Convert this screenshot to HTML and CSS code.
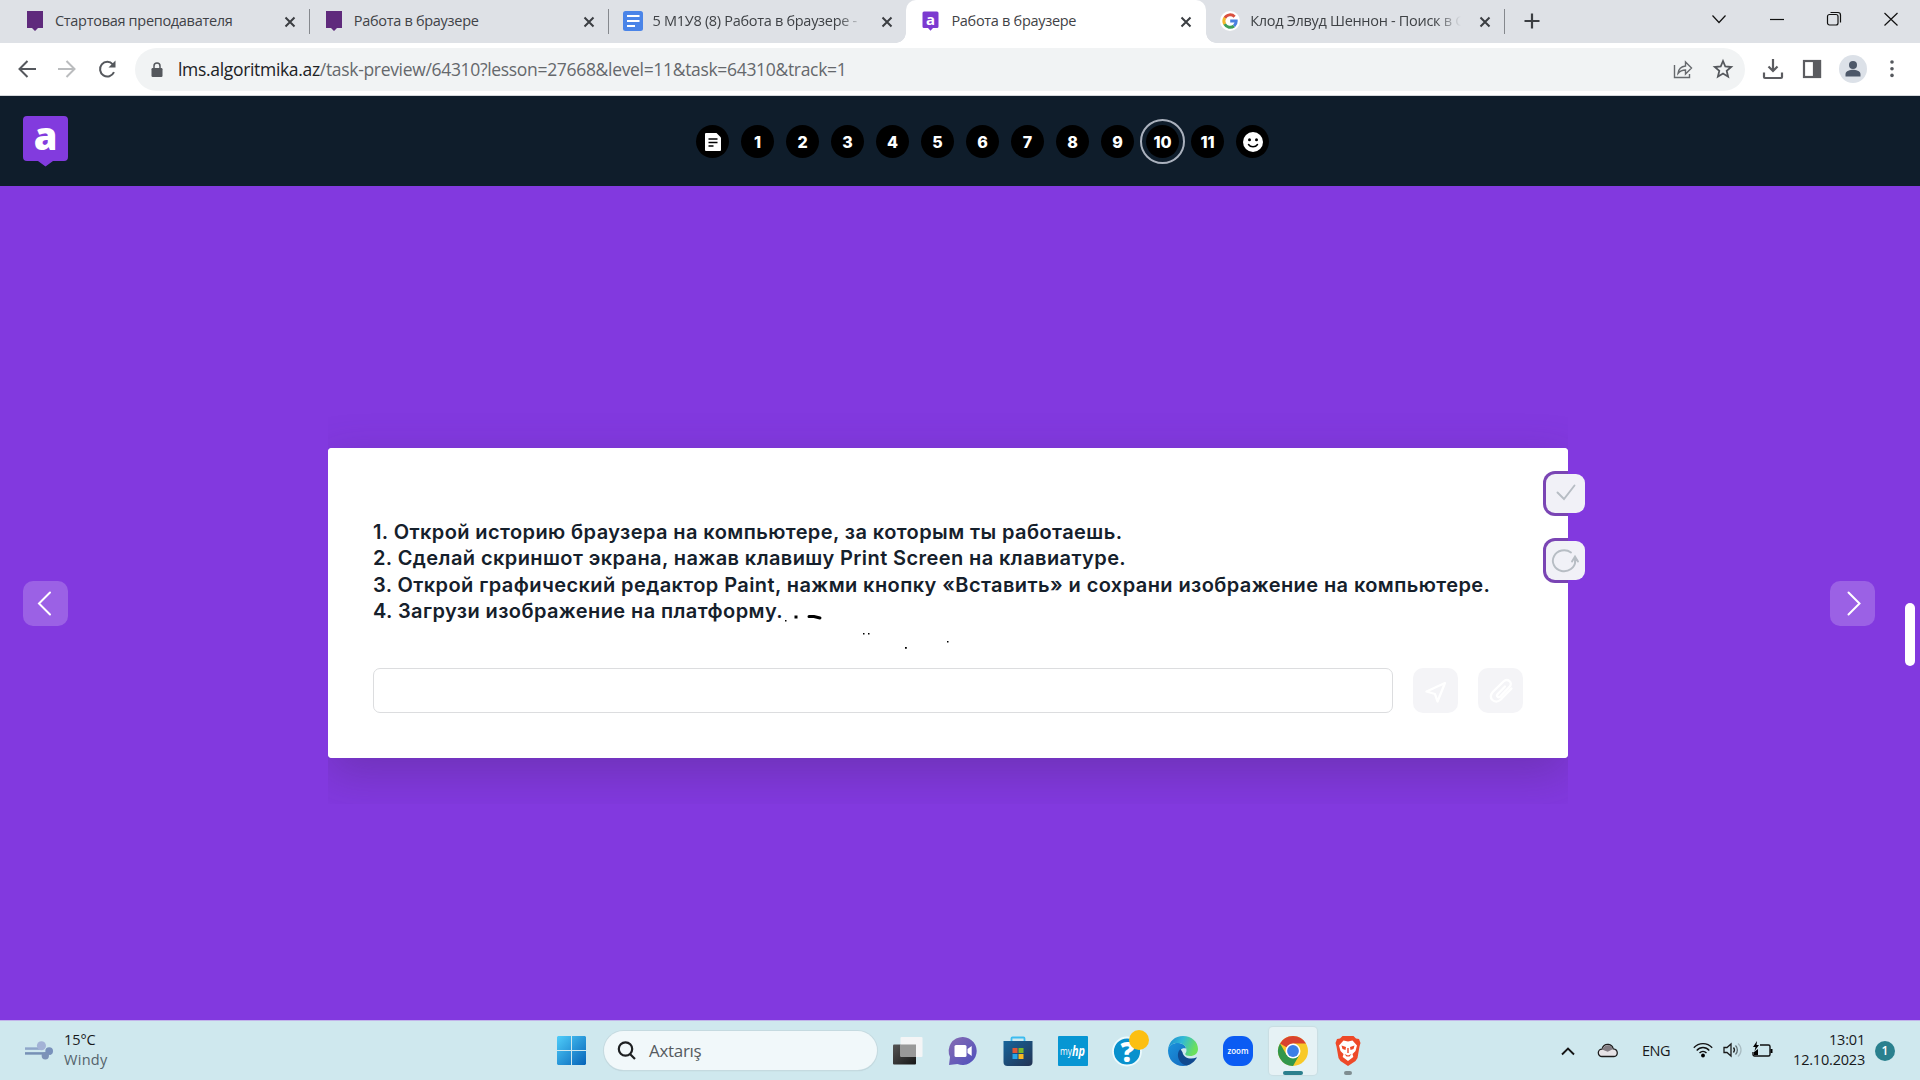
FILE: index.html
```html
<!DOCTYPE html>
<html lang="ru">
<head>
<meta charset="utf-8">
<title>Работа в браузере</title>
<link rel="stylesheet" href="styles.css">
</head>
<body>
<header class="tabstrip">
  <div class="tab">
    <svg class="fav" viewBox="0 0 20 24"><path fill="#5f2a7c" d="M2 2h16v17h-5l-3 3-3-3H2z"/></svg>
    <span class="tab-title">Стартовая преподавателя</span>
    <svg class="close" viewBox="0 0 12 12"><path d="M1.500 1.500l9 9M10.500 1.500l-9 9"/></svg>
  </div>
  <div class="tab">
    <svg class="fav" viewBox="0 0 20 24"><path fill="#5f2a7c" d="M2 2h16v17h-5l-3 3-3-3H2z"/></svg>
    <span class="tab-title">Работа в браузере</span>
    <svg class="close" viewBox="0 0 12 12"><path d="M1.500 1.500l9 9M10.500 1.500l-9 9"/></svg>
  </div>
  <div class="tab no-sep">
    <svg class="fav" viewBox="0 0 20 24"><rect y="2" width="20" height="20" rx="2.500" fill="#4a84e8"/><path stroke="#fff" stroke-width="2.200" d="M4 7h12.500M4 12h12.500M4 17h8"/></svg>
    <span class="tab-title fade">5 М1У8 (8) Работа в браузере -</span>
    <svg class="close" viewBox="0 0 12 12"><path d="M1.500 1.500l9 9M10.500 1.500l-9 9"/></svg>
  </div>
  <div class="tab active no-sep">
    <svg class="fav" viewBox="0 0 20 24"><path fill="#7c3ad0" d="M3 2.500h13a1.500 1.500 0 0 1 1.500 1.500v13.500a1.500 1.500 0 0 1-1.500 1.500h-4l-2.500 2.700L7 19H3a1.500 1.500 0 0 1-1.500-1.500V4A1.500 1.500 0 0 1 3 2.500z"/><text x="9.500" y="15.500" class="fav-a">a</text></svg>
    <span class="tab-title">Работа в браузере</span>
    <svg class="close" viewBox="0 0 12 12"><path d="M1.500 1.500l9 9M10.500 1.500l-9 9"/></svg>
  </div>
  <div class="tab">
    <svg class="fav" viewBox="0 0 20 24"><circle cx="10" cy="12" r="10" fill="#fff"/><g fill="none" stroke-width="3"><path stroke="#d9503f" d="M4.800 8.900A6.200 6.200 0 0 1 14.600 7.700"/><path stroke="#f2b92d" d="M4.800 8.700a6.500 6.500 0 0 0 0 6.600"/><path stroke="#3f9f58" d="M4.700 15.100a6.200 6.200 0 0 0 9.300 1.900"/><path stroke="#4a80e0" d="M10.200 12h6a6.200 6.200 0 0 1-2.200 5"/></g></svg>
    <span class="tab-title fade">Клод Элвуд Шеннон - Поиск в G</span>
    <svg class="close" viewBox="0 0 12 12"><path d="M1.500 1.500l9 9M10.500 1.500l-9 9"/></svg>
  </div>
  <svg class="plus" viewBox="0 0 16 16"><path d="M8 .5v15M.5 8h15"/></svg>
  <div class="window-buttons">
    <svg viewBox="0 0 16 16"><path d="M1.500 4.500L8 11.500l6.500-7"/></svg>
    <svg viewBox="0 0 16 16"><path d="M1 8.500h14"/></svg>
    <svg viewBox="0 0 16 16"><rect x="1.500" y="3.500" width="10.500" height="10.500" rx="2"/><path d="M4.500 1.500h7.500a2.500 2.500 0 0 1 2.500 2.500v7.500"/></svg>
    <svg viewBox="0 0 16 16"><path d="M1.500 2l13 12.500M14.500 2l-13 12.500"/></svg>
  </div>
</header>

<div class="toolbar">
  <svg class="tool" viewBox="0 0 20 20"><path d="M19 10H3M10.500 2L2.500 10l8 8"/></svg>
  <svg class="tool dim" viewBox="0 0 20 20"><path d="M1 10h16M9.500 2l8 8-8 8"/></svg>
  <svg class="tool" viewBox="0 0 20 20"><path d="M17 13.200A7.300 7.300 0 1 1 15.800 5.300"/><path class="solid" d="M18.500 1.500v7h-7z"/></svg>
  <div class="omnibox">
    <svg class="lock" viewBox="0 0 12 16"><rect x=".5" y="6" width="11" height="9" rx="1.200" fill="#55585d"/><path d="M3 6V4a3 3 0 0 1 6 0v2" fill="none" stroke="#55585d" stroke-width="1.500"/></svg>
    <span class="url"><b>lms.algoritmika.az</b>/task-preview/64310?lesson=27668&amp;level=11&amp;task=64310&amp;track=1</span>
    <svg class="share" viewBox="0 0 20 20"><path d="M1.500 6v12.500h15V15M5 14.500c.5-4.500 3-7 7.500-7.500V3l6 6-6 6v-4c-3.500 0-5.500 1-7.500 3.500z"/></svg>
    <svg class="star" viewBox="0 0 20 20"><path d="M10 2l2.300 5.500 5.900.5-4.500 3.900 1.400 5.800L10 14.600l-5.100 3.100 1.400-5.800L1.800 8l5.900-.5z"/></svg>
  </div>
  <div class="toolbar-actions">
    <svg viewBox="0 0 22 22"><path d="M11 1v11M6.500 8.500L11 13l4.500-4.500M2 14.500V19a1 1 0 0 0 1 1h16a1 1 0 0 0 1-1v-4.500"/></svg>
    <svg viewBox="0 0 22 22"><rect x="3" y="3" width="16" height="16"/><path class="solid" d="M13 3h6v16h-6z"/></svg>
    <svg class="avatar" viewBox="0 0 28 28"><circle cx="14" cy="14" r="14" fill="#dce1e8"/><circle cx="14" cy="10" r="4" fill="#4d5869"/><path fill="#4d5869" d="M6.500 21.500v-2.500c0-3.300 5-4.300 7.500-4.300s7.500 1 7.500 4.300v2.500z"/></svg>
    <svg class="dots" viewBox="0 0 22 22"><circle cx="11" cy="4" r="1.800"/><circle cx="11" cy="10.700" r="1.800"/><circle cx="11" cy="17.400" r="1.800"/></svg>
  </div>
</div>

<nav class="lesson-nav">
  <svg class="logo" viewBox="0 0 45 50"><path fill="#823bde" d="M4 0h37a4 4 0 0 1 4 4v37a4 4 0 0 1-4 4H30l-7.500 5.500L15 45H4a4 4 0 0 1-4-4V4a4 4 0 0 1 4-4z"/><text x="22.500" y="33.500">a</text></svg>
  <ol class="steps">
    <li><svg viewBox="0 0 16 18"><path fill="#fff" d="M1 0h10.500L16 4.500V17a1 1 0 0 1-1 1H1a1 1 0 0 1-1-1V1a1 1 0 0 1 1-1z"/><path stroke="#000" stroke-width="1.500" d="M3.500 6h9M3.500 9.500h9M3.500 13h5"/></svg></li>
    <li>1</li><li>2</li><li>3</li><li>4</li><li>5</li><li>6</li><li>7</li><li>8</li><li>9</li>
    <li class="current">10</li><li>11</li>
    <li><svg class="smile" viewBox="0 0 20 20"><circle cx="10" cy="10" r="10" fill="#fff"/><circle cx="6.500" cy="7.800" r="1.500"/><circle cx="13.500" cy="7.800" r="1.500"/><path fill="none" stroke="#000" stroke-width="1.500" stroke-linecap="round" d="M5.500 12.500c2 3 7 3 9 0"/></svg></li>
  </ol>
</nav>

<main class="stage">
  <button class="arrow"><svg viewBox="0 0 45 45"><path d="M27 11.500L16 22.500l11 11"/></svg></button>
  <section class="card">
    <div class="task">
      <p>1. Открой историю браузера на компьютере, за которым ты работаешь.</p>
      <p>2. Сделай скриншот экрана, нажав клавишу Print Screen на клавиатуре.</p>
      <p>3. Открой графический редактор Paint, нажми кнопку «Вставить» и сохрани изображение на компьютере.</p>
      <p>4. Загрузи изображение на платформу.</p>
    </div>
    <svg class="marks" viewBox="0 0 170 40"><path d="M2 10h1.500v1.500H2zM11.500 5.500h3v3h-3zM80 23h1.500v1.500H80zM85 23h1.500v1.500H85zM122 37h1.800v1.800H122zM164 31h1.500v1.500H164z"/><path fill="none" stroke="#000" stroke-width="3" stroke-linecap="round" d="M26 6.500h5l6 1.500"/></svg>
    <div class="answer">
      <input class="field" type="text">
      <button class="answer-btn"><svg viewBox="0 0 45 45"><path d="M32 15L13.500 23.500l8.500 2.500 2.500 7.500z"/></svg></button>
      <button class="answer-btn"><svg viewBox="0 0 45 45"><path d="M27 18.500l-7.500 7.700c-1.500 2 .8 4 2.600 2.400l9.400-9.800c4-4.300-2-9-6-5.300L15 23.800c-6 6.200 1.800 13.200 7.800 7.700L33.500 20.500"/></svg></button>
    </div>
    <div class="side-tools">
      <button class="side-btn"><svg viewBox="0 0 39 39"><path d="M11.500 18.500l6.500 6.500 10.500-13.500"/></svg></button>
      <button class="side-btn"><svg viewBox="0 0 39 39"><path d="M25 11.500A11.200 10.500 0 1 0 29.300 20V16M26 20.500l3-5 3 5M29 15.500v6"/></svg></button>
    </div>
  </section>
  <button class="arrow"><svg viewBox="0 0 45 45"><path d="M18.500 11.500l11 11-11 11"/></svg></button>
  <div class="scroll-thumb"></div>
</main>

<footer class="taskbar">
  <div class="weather">
    <svg viewBox="0 0 30 22"><g fill="none" stroke="#8fa6c9" stroke-width="2.600"><path d="M0 8.500h16"/><path stroke="#7790b5" d="M0 13.500h27"/></g><circle cx="17" cy="5.500" r="4.700" fill="#a3b2d6"/><circle cx="25" cy="11" r="4" fill="#7991bb"/><circle cx="21" cy="16" r="3.800" fill="#7c93b8"/></svg>
    <div class="weather-text"><span>15°C</span><span class="muted">Windy</span></div>
  </div>
  <div class="pinned">
    <svg class="win" viewBox="0 0 29 29"><defs><linearGradient id="w" x2="1" y2="1"><stop stop-color="#4fcdfa"/><stop offset="1" stop-color="#0563b8"/></linearGradient></defs><path fill="url(#w)" d="M1 0h13v14H0V1zM15 0h13l1 1v13H15zM0 15h14v14H1l-1-1zM15 15h14v13l-1 1H15z"/></svg>
    <div class="search">
      <svg viewBox="0 0 20 20"><circle cx="8.500" cy="8" r="6.700"/><path d="M13 13l5 5"/></svg>
      <span>Axtarış</span>
    </div>
    <div class="apps">
      <div class="app"><svg viewBox="0 0 30 30"><defs><linearGradient id="tv" y2="1"><stop stop-color="#555"/><stop offset="1" stop-color="#171717"/></linearGradient></defs><rect y="8.500" width="23" height="20" rx="1" fill="url(#tv)"/><rect x="7.500" y="1" width="22" height="20" rx="1" fill="#f5f5f5" opacity=".95"/><path fill="#999" d="M7.500 8.500H23V21H8.500a1 1 0 0 1-1-1z"/></svg></div>
      <div class="app"><svg viewBox="0 0 30 30"><defs><linearGradient id="ch" y2="1"><stop stop-color="#876cb2"/><stop offset="1" stop-color="#4e50bd"/></linearGradient></defs><path fill="url(#ch)" d="M15 1a14 14 0 1 1-5.500 27L1 29l1-8A14 14 0 0 1 15 1z"/><rect x="6.500" y="9" width="12" height="12" rx="1.500" fill="#fff"/><path fill="#fff" d="M19.500 13l4.200-3v10l-4.200-3z"/></svg></div>
      <div class="app"><svg viewBox="0 0 30 30"><defs><linearGradient id="st" y2="1"><stop stop-color="#16659b"/><stop offset="1" stop-color="#233353"/></linearGradient></defs><path fill="none" stroke="#3cbcf0" stroke-width="1.800" d="M8.500 6V2.500q0-1 1-1h11q1 0 1 1V6"/><path fill="url(#st)" d="M.5 5h29v21a4 4 0 0 1-4 4h-21a4 4 0 0 1-4-4z"/><path fill="#e05836" d="M9.500 12h5v5h-5z"/><path fill="#7ab929" d="M15.500 12h5v5h-5z"/><path fill="#28a5e9" d="M9.500 18h5v5h-5z"/><path fill="#f9b922" d="M15.500 18h5v5h-5z"/></svg></div>
      <div class="app"><svg viewBox="0 0 30 30"><rect width="30" height="30" rx="1" fill="#0796d3"/><text class="my" x="2" y="18.500" textLength="12" lengthAdjust="spacingAndGlyphs">my</text><text class="hp" x="14" y="19.500" textLength="13" lengthAdjust="spacingAndGlyphs">hp</text></svg></div>
      <div class="app"><svg viewBox="0 0 30 30"><circle cx="14" cy="15.500" r="14" fill="#0991cd" stroke="#edfafd" stroke-width="1.800"/><text class="question" x="14.500" y="25.500">?</text><circle cx="26" cy="4" r="10" fill="#fcbf12"/></svg></div>
      <div class="app"><svg viewBox="0 0 30 30"><defs><linearGradient id="e1" x2="1" y2=".3"><stop stop-color="#1a86cf"/><stop offset=".5" stop-color="#31b9d6"/><stop offset="1" stop-color="#6be05c"/></linearGradient><linearGradient id="e2" y2="1"><stop stop-color="#1b93dc"/><stop offset="1" stop-color="#1468bd"/></linearGradient></defs><path fill="url(#e2)" d="M0 14.500C.5 9 5 7 9.500 7c5 0 8.500 2.500 8.500 5.500-4-1-7 1.500-7 5.500 0 6 6 9.500 10 10.500-2 1-4 1.500-6 1.500C6 30 0 23 0 14.500z"/><path fill="#10498f" d="M12.500 13c-5.500 5-1.500 15.500 6.500 16.400 4-.8 8-4.200 10-8.200-6 2.800-13.500 1-14.500-5z"/><path fill="url(#e1)" d="M0 14C1 5 7 0 15 0c9 0 15 6 15 13 0 4.500-3.500 7-8 7-3 0-4.800-1-4.800-2 0-.8 1.300-1.500 1.300-3.800C18.500 10 14.500 7 9.500 7 5 7 1 9.500 0 14z"/></svg></div>
      <div class="app"><svg viewBox="0 0 30 30"><rect width="30" height="30" rx="11" fill="#0b5cf3"/><text class="zoom" x="15" y="17.500" textLength="21" lengthAdjust="spacingAndGlyphs">zoom</text></svg></div>
      <div class="app open"><svg viewBox="0 0 30 30"><circle cx="15" cy="15" r="15" fill="#f8c928"/><path fill="#d9432f" d="M2 7.500A15 15 0 0 1 28 7.500H15L8.500 11.200z"/><path fill="#31974b" d="M2 7.500a15 15 0 0 0 13 22.500l6.500-11.200L8.500 18.800z"/><circle cx="15" cy="15" r="7.500" fill="#fff"/><circle cx="15" cy="15" r="5.900" fill="#3b7fe7"/></svg></div>
      <div class="app idle"><svg viewBox="0 0 30 30"><path fill="#ee4928" d="M9.500 0h11l2.500 2.500 3 .5 1.500 4-1 3.500-2 11.500-2 3-7.500 5-7.500-5-2-3-2-11.500-1-3.500L4 3l3-.5z"/><path fill="#fff" d="M15 5.500l4.500-1 4.500 5-1.500 5.500-3 3 .8 3-5.300 4-5.300-4 .8-3-3-3L6 9.500l4.500-5z"/><path fill="#ee4928" d="M8.500 9.500l4.500 1.500-.5 3-3-1zM21.500 9.500L17 11l.5 3 3-1zM11.500 18l3.500 1.500 3.500-1.500-2 2.500h-3zM14.300 12h1.400v5h-1.400z"/></svg></div>
    </div>
  </div>
  <div class="tray">
    <svg class="up" viewBox="0 0 14 10"><path d="M1 8.500l6-6 6 6"/></svg>
    <svg class="cloud" viewBox="0 0 20 16"><path fill="#e6e3e6" stroke="#1c1c1c" stroke-width="1.300" d="M4 14.500a3.700 3.700 0 0 1 0-7.400C5 4 7.500 2.200 10.500 2.500c3 .3 4.200 2.300 4.700 4.300 5.300.5 5.300 7.700.8 7.700z"/><path fill="#817b81" d="M4 7.500C5 4.500 8 2.900 10.500 3.200c2.500.3 3.900 2 4.200 4l-5 2.500z"/></svg>
    <span class="lang">ENG</span>
    <svg class="wifi" viewBox="0 0 20 16"><g fill="none" stroke="#111" stroke-width="1.300"><path d="M.8 5.700c5-5.500 13.400-5.500 18.400 0"/><path d="M3.700 8.500c3.500-4 9.100-4 12.600 0"/><path d="M6.500 11c2-2.300 5-2.300 7 0"/></g><circle cx="10" cy="13.500" r="1.900"/></svg>
    <svg class="sound" viewBox="0 0 20 16"><g fill="none" stroke="#1a1a1a" stroke-width="1.300"><path d="M1 5.500h3L8 2v12l-4-3.500H1z"/><path d="M10.500 5.500c1.200 1.500 1.200 3.500 0 5"/><path stroke="#5f6d71" d="M12.500 3.500c2.500 2.500 2.500 6.500 0 9"/><path stroke="#a9bcc2" d="M15 1.500c4 3.500 4 9.500 0 13"/></g></svg>
    <svg class="battery" viewBox="0 0 22 18"><path fill="none" stroke="#111" stroke-width="1.400" d="M8 4h8.500A1.500 1.500 0 0 1 18 5.500v8a1.500 1.500 0 0 1-1.500 1.500h-14A1.500 1.500 0 0 1 1 13.500V11"/><path d="M18.500 8h2v4h-2zM5 0L1 6h2.500l-1 4 4.500-6H4.500zM2 11l4-3v6H2z"/></svg>
    <div class="clock"><span>13:01</span><span>12.10.2023</span></div>
    <span class="badge">1</span>
  </div>
</footer>
</body>
</html>
```

FILE: styles.css
```css
* { box-sizing: border-box; }
body {
  margin: 0;
  width: 1920px;
  height: 1080px;
  overflow: hidden;
  display: flex;
  flex-direction: column;
  font-family: "Open Sans", "Noto Sans", sans-serif;
}
button { border: 0; padding: 0; background: none; display: block; }
svg { display: block; flex: none; overflow: visible; }
p { margin: 0; white-space: nowrap; }

/* browser tabs */
.tabstrip {
  height: 43px;
  flex: none;
  background: #dee1e6;
  display: flex;
  padding-left: 11px;
}
.tab {
  width: 298.800px;
  height: 43px;
  flex: none;
  display: flex;
  align-items: center;
  padding: 0 14px;
  position: relative;
}
.tab:not(.no-sep)::after {
  content: "";
  position: absolute;
  right: 0;
  top: 9px;
  width: 1px;
  height: 25px;
  background: #85888d;
}
.tab.active { background: #fff; border-radius: 10px 10px 0 0; margin-left: -1px; padding-left: 15px; width: 299.800px; padding-right: 13px; }
.tab.active::before {
  content: "";
  position: absolute;
  left: -10px;
  right: -10px;
  bottom: 0;
  height: 10px;
  background:
    radial-gradient(circle at 0 0, transparent 9.500px, #fff 10px) left / 10px 10px no-repeat,
    radial-gradient(circle at 100% 0, transparent 9.500px, #fff 10px) right / 10px 10px no-repeat;
}
.fav { width: 20px; height: 24px; margin-bottom: 1px; }
.fav-a { font: 700 15px "Open Sans", sans-serif; fill: #fff; text-anchor: middle; }
.tab-title {
  margin-left: 10px;
  width: 218px;
  font-size: 14.500px;
  line-height: 20px;
  letter-spacing: -0.300px;
  color: #3f4246;
  white-space: nowrap;
  overflow: hidden;
  margin-bottom: 2px;
}
.fade { -webkit-mask-image: linear-gradient(90deg, #000 185px, transparent 211px); mask-image: linear-gradient(90deg, #000 185px, transparent 211px); }
.close { width: 12px; height: 12px; margin-left: 11px; fill: none; stroke: #3b3e42; stroke-width: 2; }
.plus { width: 16px; height: 16px; margin: 13px 0 0 19px; stroke: #3b3e42; stroke-width: 2.200; }
.window-buttons { margin-left: auto; padding: 11px 21px 0 0; display: flex; gap: 41.200px; }
.window-buttons svg { width: 16px; height: 16px; fill: none; stroke: #111; stroke-width: 1.200; }

/* address bar */
.toolbar {
  height: 53px;
  flex: none;
  background: #fff;
  border-bottom: 1px solid #d5d8dc;
  display: flex;
  align-items: center;
  padding: 0 16px 0 17px;
}
.tool { width: 20px; height: 20px; margin-right: 20px; fill: none; stroke: #55585d; stroke-width: 2; }
.tool.dim { stroke: #babcbe; }
.tool .solid { fill: #55585d; stroke: none; }
.tool + .omnibox { margin-left: -2px; }
.omnibox {
  width: 1610px;
  height: 43px;
  border-radius: 22px;
  background: #f1f3f4;
  display: flex;
  align-items: center;
  padding: 0 12px 0 16px;
}
.lock { width: 12px; height: 16px; margin-top: 2px; }
.url { margin: 0 0 0 15px; font-size: 17.500px; line-height: 26px; letter-spacing: -0.320px; color: #65686c; white-space: nowrap; }
.url b { font-weight: 400; color: #202124; }
.share { width: 20px; height: 20px; margin-left: auto; fill: none; stroke: #66696d; stroke-width: 1.400; }
.star { width: 20px; height: 20px; margin-left: 20px; fill: none; stroke: #55585d; stroke-width: 1.800; }
.toolbar-actions { display: flex; align-items: center; margin-left: 17px; gap: 17px; }
.toolbar-actions svg { width: 22px; height: 22px; fill: none; stroke: #5b5c60; stroke-width: 2.200; }
.toolbar-actions .solid { fill: #5b5c60; }
.toolbar-actions .avatar { width: 28px; height: 28px; stroke: none; margin-left: -1px; }
.toolbar-actions .dots { fill: #55585d; stroke: none; margin-left: -3px; }

/* lesson steps */
.lesson-nav {
  height: 90px;
  flex: none;
  background: #0f1d2b;
  display: flex;
  align-items: center;
  padding-left: 23px;
}
.logo { width: 45px; height: 50px; }
.logo text { font: 800 38px "Open Sans", sans-serif; fill: #fff; text-anchor: middle; }
.steps { list-style: none; margin: 1px 0 0 628px; padding: 0; display: flex; gap: 12px; }
.steps li {
  width: 33px;
  height: 33px;
  border-radius: 50%;
  background: #000;
  color: #fff;
  display: flex;
  align-items: center;
  justify-content: center;
  padding-top: 1px;
  font: 800 16px/32px Inter, sans-serif;
}
.steps .current { outline: 2px solid #aab1bd; outline-offset: 4px; }
.steps svg { width: 16px; height: 18px; }
.steps .smile { width: 20px; height: 20px; }

/* task area */
.stage {
  height: 834px;
  flex: none;
  background: #8239df;
  position: relative;
  display: flex;
  align-items: center;
  justify-content: space-between;
  padding: 0 45px 0 23px;
}
.arrow { width: 45px; height: 45px; border-radius: 10px; background: #9b61e5; }
.arrow svg { width: 45px; height: 45px; fill: none; stroke: #fff; stroke-width: 2; stroke-linecap: round; }
.card {
  width: 1240px;
  height: 310px;
  margin-right: 2px;
  background: #fff;
  border-radius: 4px;
  position: relative;
  padding: 71px 45px 45px;
  display: flex;
  flex-direction: column;
  justify-content: space-between;
}
/* shadow is visible only above and below the card */
.card::before {
  content: "";
  position: absolute;
  inset: 0;
  border-radius: 4px;
  background: #fff;
  box-shadow: 0 15px 45px rgba(75, 40, 110, .36);
  clip-path: inset(-45px 0 -46px 0);
}
.task { position: relative; font: 600 20px/26.400px Inter, sans-serif; letter-spacing: .41px; color: #15202b; }
.marks { position: absolute; left: 455px; top: 162px; width: 170px; height: 40px; }
.answer { position: relative; display: flex; gap: 20px; }
.field { width: 1020px; height: 45px; border: 1px solid #dcdddf; border-radius: 7px; background: #fff; }
.answer-btn { width: 45px; height: 45px; border-radius: 10px; background: #f4f4f7; }
.answer-btn svg { width: 45px; height: 45px; fill: none; stroke: #fff; stroke-width: 2.300; stroke-linejoin: round; stroke-linecap: round; }
.side-tools { position: absolute; left: 1215px; top: 23px; display: flex; flex-direction: column; gap: 22px; }
.side-btn {
  width: 45px;
  height: 45px;
  padding: 3px;
  border-radius: 12px;
  background: linear-gradient(90deg, #7a45b4 25px, #8239df 25px);
}
.side-btn svg { width: 39px; height: 39px; border-radius: 9px; background: #f1f1f7; fill: none; stroke: #b7bdc4; stroke-width: 1.900; stroke-linecap: round; }
.scroll-thumb { position: absolute; left: 1905px; top: 417px; width: 10px; height: 63px; border-radius: 5px; background: #fff; }

/* taskbar */
.taskbar {
  height: 60px;
  flex: none;
  background: #cfe8ee;
  border-top: 1px solid #c3b3eb;
  display: flex;
  align-items: center;
  padding: 0 25px;
  font-size: 14.500px;
  color: #17191b;
}
.weather { width: 532px; display: flex; align-items: center; gap: 10px; }
.weather svg { width: 29px; height: 22px; }
.weather-text { display: flex; flex-direction: column; line-height: 20px; letter-spacing: -0.100px; margin-top: -2px; }
.weather-text .muted { letter-spacing: .3px; }
.muted { color: #55636b; }
.pinned { display: flex; align-items: center; }
.win { width: 29px; height: 29px; }
.search {
  width: 273px;
  height: 39px;
  margin-left: 18px;
  border-radius: 20px;
  background: #f1f8fa;
  box-shadow: 0 0 0 1px #c5dae0, 0 1px 1px #a9bec4;
  display: flex;
  align-items: center;
  padding-left: 13px;
  gap: 12px;
  font-size: 17px;
  color: #565b5f;
}
.search svg { width: 20px; height: 20px; fill: none; stroke: #1e2022; stroke-width: 2.200; }
.search span { letter-spacing: -0.300px; }
.apps { display: flex; gap: 7px; margin-left: 7px; }
.app {
  width: 48px;
  height: 48px;
  display: flex;
  align-items: center;
  justify-content: center;
  position: relative;
}
.app svg { width: 30px; height: 30px; }
.app.open { background: #e6f2f5; border-radius: 4px; box-shadow: 0 0 1px 1px #c9dde2; }
.app.open::after, .app.idle::after {
  content: "";
  position: absolute;
  bottom: 0;
  height: 4px;
  width: 20px;
  border-radius: 2px;
  background: #2c808d;
}
.app.idle::after { width: 8px; background: #7f8d90; }
.my { font: 400 10px "Open Sans", sans-serif; fill: #fff; }
.hp { font: italic 700 14px "Open Sans", sans-serif; fill: #fff; }
.question { font: 800 28px "Open Sans", sans-serif; fill: #fff; text-anchor: middle; }
.zoom { font: 600 8.500px "Open Sans", sans-serif; fill: #fff; text-anchor: middle; }
.tray { margin-left: auto; display: flex; align-items: center; }
.up { width: 14px; height: 10px; fill: none; stroke: #151515; stroke-width: 1.900; }
.cloud { width: 20px; height: 16px; margin: -2px 0 0 23px; }
.lang { width: 29px; margin: -1px 0 0 24px; letter-spacing: -0.500px; white-space: nowrap; }
.wifi { width: 20px; height: 16px; margin: -2px 0 0 22px; }
.sound { width: 20px; height: 16px; margin: -1px 0 0 10px; }
.battery { width: 22px; height: 18px; margin: -2px 0 0 9px; }
.clock { width: 74px; margin-left: 17px; text-align: right; line-height: 20px; display: flex; flex-direction: column; align-items: flex-end; margin-top: -2px; letter-spacing: -0.200px; }
.badge { width: 20px; height: 20px; margin-left: 10px; border-radius: 50%; background: #2a808e; color: #fff; font-size: 12px; font-weight: 600; line-height: 20px; text-align: center; }
```
